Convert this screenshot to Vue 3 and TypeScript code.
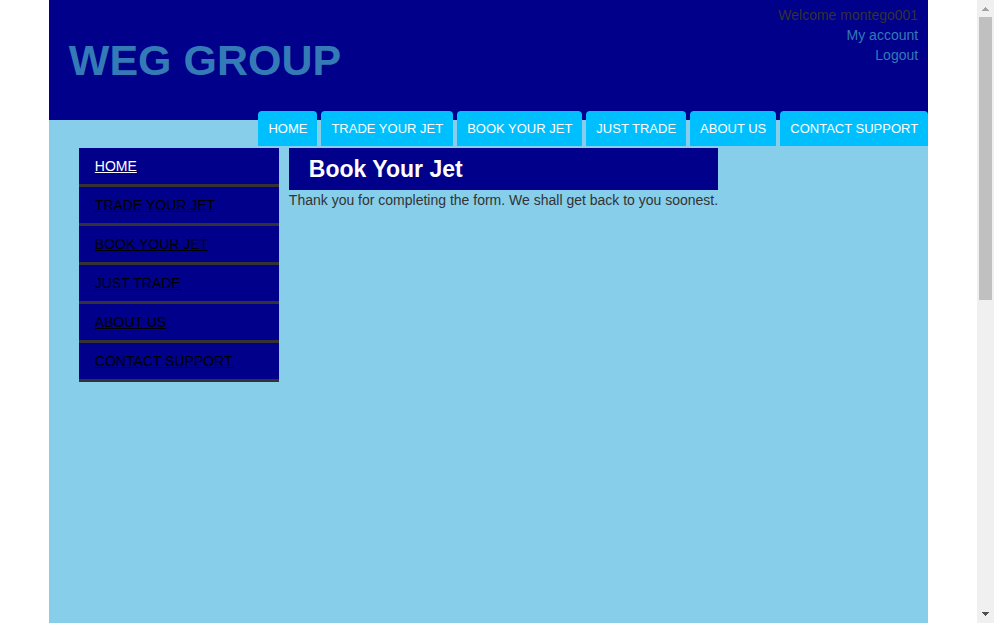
<script setup lang="ts">
interface NavItem {
  label: string
  href: string
}

const items: NavItem[] = [
  { label: 'HOME', href: '#home' },
  { label: 'TRADE YOUR JET', href: '#trade-your-jet' },
  { label: 'BOOK YOUR JET', href: '#book-your-jet' },
  { label: 'JUST TRADE', href: '#just-trade' },
  { label: 'ABOUT US', href: '#about-us' },
  { label: 'CONTACT SUPPORT', href: '#contact-support' },
]
</script>

<template>
  <div class="window">
    <div class="viewport">
      <div class="container">
        <header class="header">
          <h1 class="brand"><a href="#home">WEG GROUP</a></h1>
          <div class="account">
            <span>Welcome montego001</span>
            <a href="#account">My account</a>
            <a href="#logout">Logout</a>
          </div>
        </header>
        <nav class="tabs">
          <a v-for="item in items" :key="item.href" class="tab" :href="item.href">{{ item.label }}</a>
        </nav>
        <div class="body">
          <nav class="side">
            <a v-for="item in items" :key="item.href" class="side-link" :href="item.href">{{ item.label }}</a>
          </nav>
          <main class="content">
            <h2 class="title">Book Your Jet</h2>
            <p class="message">Thank you for completing the form. We shall get back to you soonest.</p>
          </main>
        </div>
      </div>
    </div>
    <div class="scrollbar" aria-hidden="true">
      <svg class="arrow" viewBox="0 0 17 17" shape-rendering="crispEdges">
        <path fill="#a3a3a3" d="M8 7h1v1h1v1h1v1h1v1H5v-1h1V9h1V8h1z" />
      </svg>
      <div class="track"><div class="thumb"></div></div>
      <svg class="arrow" viewBox="0 0 17 17" shape-rendering="crispEdges">
        <path fill="#505050" d="M5 6h7v1h-1v1h-1v1H9v1H8V9H7V8H6V7H5z" />
      </svg>
    </div>
  </div>
</template>

<style>
body {
  margin: 0;
  background: #fff;
}
</style>

<style scoped>
.window {
  display: flex;
  min-height: 100vh;
  font-family: 'Liberation Sans', Arial, sans-serif;
  font-size: 14px;
  line-height: 20px;
  color: #333;
}
.viewport {
  flex: 1;
  display: flex;
  justify-content: center;
}
.container {
  width: 90%;
  background: #87ceeb;
}
.header {
  box-sizing: border-box;
  height: 120px;
  display: flex;
  justify-content: space-between;
  padding: 5px 10px 0 20px;
  background: #00008b;
}
.brand {
  margin: 32px 0 0;
  font-size: 43px;
  line-height: 47px;
  font-weight: 700;
}
.header a {
  color: #337ab7;
  text-decoration: none;
}
.account {
  display: flex;
  flex-direction: column;
  align-items: flex-end;
}
.tabs {
  display: flex;
  justify-content: flex-end;
  gap: 4px;
  margin-top: -9px;
}
.tab {
  padding: 8px 10px 7px;
  border-radius: 4px 4px 0 0;
  background: #00bfff;
  color: #fff;
  font-size: 13px;
  text-decoration: none;
}
.body {
  display: flex;
  align-items: flex-start;
  gap: 10px;
  padding: 2px 30px 0;
}
.side {
  width: 200px;
}
.side-link {
  display: block;
  padding: 8px 16px;
  border-bottom: 3px solid #333;
  background: #00008b;
  color: #000;
  text-decoration: underline;
}
.side-link:first-child {
  color: #fff;
}
.title {
  margin: 0;
  padding: 8px 20px;
  background: #00008b;
  color: #fff;
  font-size: 23px;
  line-height: 26px;
  font-weight: 700;
}
.message {
  margin: 0;
}
.scrollbar {
  width: 17px;
  display: flex;
  flex-direction: column;
  background: #f0f0f0;
}
.arrow {
  display: block;
  width: 17px;
  height: 17px;
}
.track {
  flex: 1;
  padding: 0 2px;
}
.thumb {
  height: 48%;
  background: #c0c0c0;
}
</style>
